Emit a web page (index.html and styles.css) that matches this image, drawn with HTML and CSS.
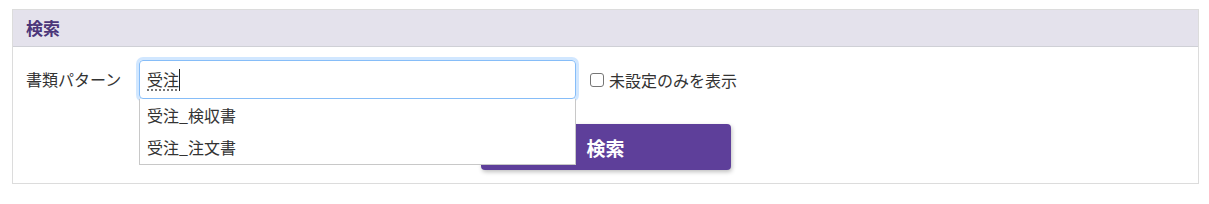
FILE: index.html
```html
<!DOCTYPE html>
<html lang="ja">
<head>
  <meta charset="UTF-8" />
  <title>検索</title>
  <link rel="stylesheet" href="styles.css">
</head>
<body>
  <div class="panel">
    <div class="panel-head">検索</div>
    <div class="panel-body">
      <div class="form-row">
        <label class="label">書類パターン</label>
        <div class="combo">
          <div class="input"><span class="ime">受注</span><span class="caret"></span></div>
          <ul class="suggest">
            <li>受注_検収書</li>
            <li>受注_注文書</li>
          </ul>
        </div>
        <label class="check"><span class="box"></span>未設定のみを表示</label>
      </div>
      <div class="actions">
        <button class="btn-search">検索</button>
      </div>
    </div>
  </div>
</body>
</html>
```

FILE: styles.css
```css
* {
  margin: 0;
  padding: 0;
  box-sizing: border-box;
}

body {
  background: #fff;
  font-family: "Noto Sans CJK JP", "Noto Sans", sans-serif;
  font-size: 16px;
  color: #333;
  padding: 9px 10px 0 12px;
}

.panel {
  border: 1px solid #dcdcdc;
  height: 175px;
}

.panel-head {
  background: #e4e2ec;
  border-bottom: 1px solid #cfd0d6;
  height: 37px;
  padding-left: 13px;
  font-size: 17px;
  font-weight: bold;
  color: #4b3679;
  line-height: 36px;
}

.panel-body {
  padding: 13px 13px 0 13px;
}

.form-row {
  display: flex;
  align-items: center;
  height: 39px;
}

.label {
  width: 113px;
  line-height: 39px;
}

.combo {
  position: relative;
  width: 437px;
}

.input {
  height: 39px;
  border: 1px solid #86bdf8;
  border-radius: 4px;
  box-shadow: 0 0 0 3px rgba(0, 123, 255, 0.18);
  padding-left: 7px;
  line-height: 37px;
  display: flex;
  align-items: center;
}

.ime {
  text-decoration: underline dotted #555;
  text-underline-offset: 4px;
}

.caret {
  display: inline-block;
  width: 1px;
  height: 22px;
  background: #222;
}

.suggest {
  position: absolute;
  left: 0;
  top: 39px;
  width: 437px;
  list-style: none;
  background: #fff;
  border: 1px solid #c8c8c8;
  border-top: none;
  z-index: 2;
  padding-top: 1px;
}

.suggest li {
  height: 32px;
  line-height: 30px;
  padding-left: 7px;
}

.check {
  display: flex;
  align-items: center;
  margin-left: 14px;
  gap: 5px;
}

.box {
  width: 14px;
  height: 14px;
  border: 1px solid #767676;
  border-radius: 3px;
  background: #fff;
}

.actions {
  display: flex;
  justify-content: center;
  margin-top: 25px;
}

.btn-search {
  width: 250px;
  height: 46px;
  border: none;
  border-radius: 4px;
  background: #5e3f9a;
  color: #fff;
  font-family: inherit;
  font-size: 19px;
  font-weight: bold;
  box-shadow: 1px 2px 4px rgba(0, 0, 0, 0.25);
}
```
